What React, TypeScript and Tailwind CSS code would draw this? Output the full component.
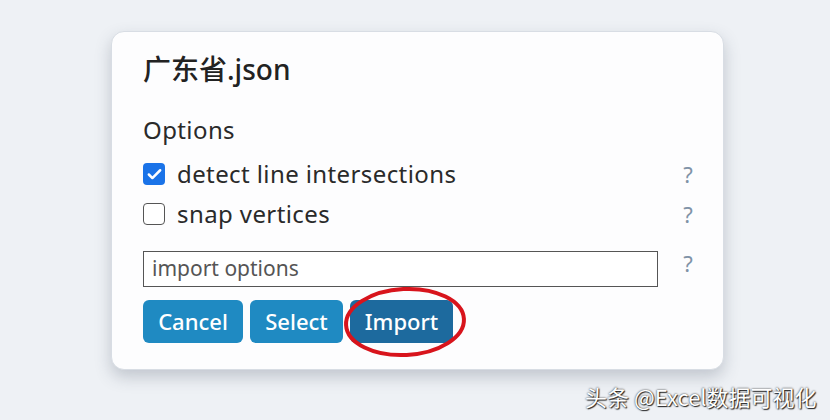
import { Check } from 'lucide-react'

function HelpMark() {
  return <span className="block w-[30px] text-center text-[22px] text-[#8093a7] leading-none">?</span>
}

function App() {
  return (
    <div className="relative h-[420px] w-[830px] overflow-hidden bg-[#eef1f5] pl-[111px] pt-[31px] font-['Noto_Sans','Noto_Sans_CJK_SC',sans-serif]">
      {/* Dialog */}
      <div className="flex h-[339px] w-[613px] flex-col rounded-[13px] border border-[#d8dde4] bg-[#fdfdfe] pl-[31px] pr-[20px] shadow-[0_7px_16px_rgba(60,70,90,0.25)]">
        <h1 className="mt-[17px] text-[28px] font-medium leading-[40px] text-[#222]">
          广东省.json
        </h1>

        <h2 className="mt-[25px] text-[24px] leading-[32px] tracking-[0.4px] text-[#2a2a2a]">Options</h2>

        <div className="mt-[16px] flex h-[24px] items-center">
          <span className="flex h-[22px] w-[22px] items-center justify-center rounded-[4px] bg-[#1a73e8]">
            <Check className="h-[17px] w-[17px] text-white" strokeWidth={3.5} />
          </span>
          <span className="ml-[12px] flex-1 text-[24px] tracking-[0.4px] text-[#2a2a2a]">detect line intersections</span>
          <HelpMark />
        </div>

        <div className="mt-[16px] flex h-[24px] items-center">
          <span className="h-[22px] w-[22px] rounded-[4px] border-[1.5px] border-[#555] bg-white" />
          <span className="ml-[12px] flex-1 text-[24px] tracking-[0.4px] text-[#2a2a2a]">snap vertices</span>
          <HelpMark />
        </div>

        <div className="mt-[25px] flex items-start">
          <div className="flex h-[36px] w-[515px] items-center border border-[#555] bg-white px-[8px] text-[21px] text-[#555]">
            import options
          </div>
          <span className="flex-1" />
          <span className="mt-[1px]"><HelpMark /></span>
        </div>

        <div className="mt-[13px] flex gap-[7px]">
          <button className="h-[43px] w-[100px] rounded-[6px] bg-[#1f8ac2] text-[22px] font-medium text-white">
            Cancel
          </button>
          <button className="h-[43px] w-[93px] rounded-[6px] bg-[#1f8ac2] text-[22px] font-medium text-white">
            Select
          </button>
          <div className="relative">
            <button className="h-[43px] w-[103px] rounded-[6px] bg-[#1d6a9e] text-[22px] font-medium text-white">
              Import
            </button>
            <svg className="pointer-events-none absolute left-[-8px] top-[-16px]" width="130" height="76" viewBox="0 0 130 76">
              <ellipse cx="63" cy="38" rx="59" ry="33" fill="none" stroke="#d8141c" strokeWidth="4" transform="rotate(-3 63 38)" />
            </svg>
          </div>
        </div>
      </div>

      {/* Watermark */}
      <div className="absolute left-[585px] top-[380px] text-[22px] text-white font-['Noto_Sans_CJK_SC',sans-serif] [text-shadow:0_0_2px_rgba(0,0,0,0.9),1px_1px_1px_rgba(0,0,0,0.8)]">
        头条 @Excel数据可视化
      </div>
    </div>
  )
}

export default App
